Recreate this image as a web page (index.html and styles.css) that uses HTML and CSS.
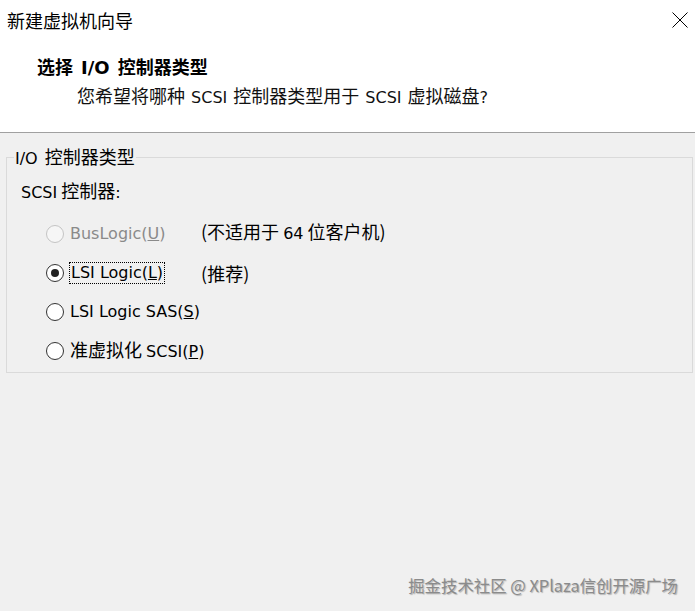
FILE: index.html
```html
<!DOCTYPE html>
<html lang="zh-CN">
<head>
<meta charset="utf-8">
<title>新建虚拟机向导</title>
<link rel="stylesheet" href="styles.css">
</head>
<body>
<div class="win">
  <header class="head">
    <div class="titlebar">
      <span class="title">新建虚拟机向导</span>
      <svg class="close" width="16" height="16" viewBox="0 0 16 16"><path d="M0.5 0.5 L15.5 15.5 M15.5 0.5 L0.5 15.5" stroke="#000" stroke-width="1" fill="none"/></svg>
    </div>
    <div class="heading">选择 <span class="lb">I/O</span> 控制器类型</div>
    <div class="sub">您希望将哪种 <span class="l">SCSI</span> 控制器类型用于 <span class="l">SCSI</span> 虚拟磁盘<span class="l">?</span></div>
  </header>
  <main class="main">
    <fieldset class="group">
      <legend class="legend"><span class="l">I/O</span> 控制器类型</legend>
      <div class="label"><span class="l">SCSI</span> 控制器<span class="l">:</span></div>
      <div class="opts">
        <div class="opt disabled">
          <span class="radio"></span>
          <span class="otext l">BusLogic(<u>U</u>)</span>
          <span class="note">(不适用于 <span class="l">64</span> 位客户机)</span>
        </div>
        <div class="opt">
          <span class="radio checked"></span>
          <span class="otext l focus">LSI Logic(<u>L</u>)</span>
          <span class="note">(推荐)</span>
        </div>
        <div class="opt">
          <span class="radio"></span>
          <span class="otext l">LSI Logic SAS(<u>S</u>)</span>
        </div>
        <div class="opt">
          <span class="radio"></span>
          <span class="otext">准虚拟化 <span class="l">SCSI(<u>P</u>)</span></span>
        </div>
      </div>
    </fieldset>
    <footer class="wm">掘金技术社区 @ XPlaza信创开源广场</footer>
  </main>
</div>
</body>
</html>
```
FILE: styles.css
```css
* { box-sizing: border-box; }
html, body { margin: 0; padding: 0; }
body {
  width: 695px;
  height: 611px;
  background: #f0f0f0;
  font-family: "Noto Sans CJK SC", sans-serif;
  font-size: 18px;
  line-height: 18px;
  color: #000;
  overflow: hidden;
}
.win { display: flex; flex-direction: column; height: 611px; }
.l { font-family: "DejaVu Sans", "Noto Sans CJK SC", sans-serif; font-size: 16px; }
.lb { font-family: "DejaVu Sans", "Noto Sans CJK SC", sans-serif; font-size: 18px; font-weight: bold; }

.head {
  box-sizing: content-box;
  height: 132px;
  background: #fff;
  border-bottom: 1px solid #a0a0a0;
}
.titlebar {
  display: flex;
  justify-content: space-between;
  align-items: flex-start;
  padding: 11px 7px 0 7px;
  height: 29px;
}
.title { font-size: 18px; line-height: 18px; }
.close { margin-top: 1px; margin-right: 0; }
.heading {
  margin-top: 28px;
  padding-left: 37px;
  font-weight: bold;
  word-spacing: 4px;
}
.sub {
  margin-top: 9px;
  padding-left: 77px;
  color: #111;
  word-spacing: 2px;
}

.main { flex: 1; display: flex; flex-direction: column; }
.group {
  margin: 14px 2px 0 6px;
  padding: 11px 0 2px 0;
  border: 1px solid #dadada;
  min-width: 0;
}
.legend {
  margin-left: 7px;
  padding: 0 1px;
  line-height: 18px;
  word-spacing: 3px;
}
.label {
  padding-left: 14px;
  line-height: 22px;
}
.opts {
  margin-top: 10px;
  display: flex;
  flex-direction: column;
}
.opt {
  height: 39px;
  display: flex;
  align-items: center;
  padding-left: 39px;
  white-space: nowrap;
}
.radio {
  width: 18px;
  height: 18px;
  border-radius: 50%;
  border: 1px solid #333;
  background: #fff;
  flex: none;
  display: flex;
  align-items: center;
  justify-content: center;
}
.radio.checked::after {
  content: "";
  width: 8px;
  height: 8px;
  border-radius: 50%;
  background: #222;
}
.otext {
  margin-left: 6px;
  min-width: 131px;
  line-height: 20px;
}
.focus {
  min-width: 0;
  outline: 1px dotted #000;
  outline-offset: 0;
  padding: 0 1px;
  margin-right: 37px;
}
.disabled .radio { border-color: #c4c4c4; background: #f6f6f6; }
.disabled .otext { color: #8a8a8a; }
.disabled .note { margin-top: -2px; }

.wm {
  margin-top: auto;
  align-self: flex-end;
  padding: 0 17px 17px 0;
  font-size: 16.4px;
  line-height: 17px;
  color: #8b8b8b;
  text-shadow: 1px 1px 1px rgba(0,0,0,0.25);
}
```
